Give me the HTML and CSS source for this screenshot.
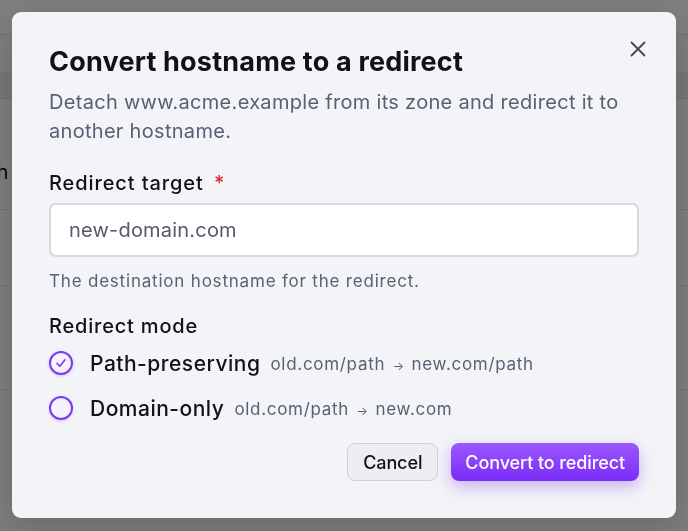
FILE: index.html
```html
<!DOCTYPE html>
<html lang="en">
<head>
  <meta charset="UTF-8" />
  <title>Hostnames – Convert to redirect</title>
  <meta name="viewport" content="width=device-width, initial-scale=1" />
  <link rel="stylesheet" href="styles.css">
</head>
<body>
  <!-- page behind the dialog -->
  <div class="page">
    <div class="page-bar"></div>
    <div class="page-tabs"></div>
    <div class="table-head"></div>
    <div class="table-row tall"><span class="cell">Path</span></div>
    <div class="table-row"></div>
    <div class="table-row mid"></div>
    <div class="table-row"></div>
  </div>
  <div class="backdrop"></div>

  <div class="dialog" role="dialog" aria-labelledby="dlg-title">
    <button class="close-btn" aria-label="Close">
      <svg width="16" height="16" viewBox="0 0 16 16" fill="none" stroke="#45474f" stroke-width="1.8" stroke-linecap="round">
        <path d="M1.5 1.5 L14.5 14.5 M14.5 1.5 L1.5 14.5" />
      </svg>
    </button>
    <h2 class="dialog-title" id="dlg-title">Convert hostname to a redirect</h2>
    <p class="dialog-desc">Detach www.acme.example from its zone and redirect it to another hostname.</p>

    <label class="field-label" for="target">Redirect target <span class="req">*</span></label>
    <input class="text-input" id="target" type="text" placeholder="new-domain.com">
    <div class="help">The destination hostname for the redirect.</div>

    <div class="field-label mode-label">Redirect mode</div>
    <div class="radio-list">
      <label class="radio-row">
        <span class="radio checked">
          <svg width="12" height="12" viewBox="0 0 12 12" fill="none" stroke="#7c3aed" stroke-width="1.6" stroke-linecap="round" stroke-linejoin="round">
            <path d="M2 6.4 L4.8 9.2 L10 2.8" />
          </svg>
        </span>
        <span class="radio-name">Path-preserving</span>
        <span class="radio-hint">old.com/path <span class="arrow">→</span> new.com/path</span>
      </label>
      <label class="radio-row">
        <span class="radio"></span>
        <span class="radio-name">Domain-only</span>
        <span class="radio-hint">old.com/path <span class="arrow">→</span> new.com</span>
      </label>
    </div>

    <div class="actions">
      <button class="btn btn-ghost">Cancel</button>
      <button class="btn btn-primary">Convert to redirect</button>
    </div>
  </div>
</body>
</html>
```

FILE: styles.css
```css
:root {
  --violet: #7c3aed;
  --ink: #111216;
  --muted: #5a5f72;
}
html, body {
  margin: 0;
  padding: 0;
  height: 100%;
  overflow: hidden;
}
body {
  font-family: 'Inter', 'Noto Sans', Arial, sans-serif;
  color: var(--ink);
  background: #fafafa;
  position: relative;
}

/* faint table underneath */
.page {
  margin-left: -40px;
}
.page-bar {
  height: 34px;
  border-bottom: 1px solid #e4e4e4;
  background: #fdfdfd;
}
.page-tabs {
  height: 37px;
  background: #fafafa;
}
.table-head {
  height: 25px;
  background: #ececec;
  border-top: 1px solid #e2e2e2;
}
.table-row {
  height: 75px;
  border-top: 1px solid #e2e2e2;
  display: flex;
  align-items: center;
}
.table-row.tall {
  height: 110px;
}
.table-row.mid {
  height: 103px;
}
.cell {
  font-size: 20px;
  color: #111;
  padding-top: 36px;
  padding-left: 6px;
}
.backdrop {
  position: fixed;
  inset: 0;
  background: rgba(0, 0, 0, 0.5);
}

/* dialog */
.dialog {
  position: absolute;
  left: 12px;
  top: 12px;
  width: 664px;
  height: 506px;
  box-sizing: border-box;
  padding: 34px 37px 37px 37px;
  background: #f3f4f8;
  border-radius: 9px;
  box-shadow: 0 10px 30px rgba(0, 0, 0, 0.15);
}
.close-btn {
  position: absolute;
  top: 23px;
  right: 24px;
  width: 28px;
  height: 28px;
  padding: 0;
  border: none;
  background: transparent;
  display: flex;
  align-items: center;
  justify-content: center;
  cursor: pointer;
}
.dialog-title {
  margin: 0;
  font-size: 27px;
  line-height: 32px;
  font-weight: 700;
  letter-spacing: 0.2px;
}
.dialog-desc {
  margin: 10px 0 0 0;
  font-size: 20px;
  line-height: 29px;
  color: var(--muted);
  letter-spacing: 0.3px;
  max-width: 585px;
}
.field-label {
  display: block;
  margin-top: 25px;
  font-size: 20px;
  line-height: 24px;
  font-weight: 500;
  letter-spacing: 0.9px;
}
.req {
  color: #e5252a;
  margin-left: 4px;
}
.text-input {
  display: block;
  margin-top: 8px;
  width: 100%;
  height: 54px;
  box-sizing: border-box;
  padding: 0 18px;
  border: 2px solid #d9dadf;
  border-radius: 7px;
  background: #fff;
  font-family: inherit;
  font-size: 20px;
  letter-spacing: 0.2px;
  color: var(--ink);
  outline: none;
}
.text-input::placeholder {
  color: #555a6e;
}
.help {
  margin-top: 13px;
  font-size: 17px;
  line-height: 22px;
  color: var(--muted);
  letter-spacing: 0.8px;
}
.mode-label {
  margin-top: 22px;
  letter-spacing: 0.8px;
}
.radio-list {
  margin-top: 13px;
  display: flex;
  flex-direction: column;
  gap: 21px;
}
.radio-row {
  display: flex;
  align-items: center;
  height: 24px;
  cursor: pointer;
}
.radio {
  width: 20px;
  height: 20px;
  border: 2px solid var(--violet);
  border-radius: 50%;
  background: #f6f3ff;
  box-shadow: 0 1px 3px rgba(124, 58, 237, 0.25);
  display: flex;
  align-items: center;
  justify-content: center;
  margin-right: 17px;
  flex: none;
}
.radio-name {
  font-size: 21px;
  font-weight: 500;
  letter-spacing: 0.5px;
}
.radio-hint {
  margin-left: 10px;
  font-size: 17px;
  color: var(--muted);
  letter-spacing: 0.7px;
  padding-top: 1px;
}
.arrow {
  font-size: 12px;
  letter-spacing: 0;
  margin: 0 2px;
}
.actions {
  margin-top: 23px;
  display: flex;
  justify-content: flex-end;
  gap: 13px;
}
.btn {
  font-family: inherit;
  font-size: 18px;
  font-weight: 500;
  height: 38px;
  border-radius: 8px;
  cursor: pointer;
  letter-spacing: -0.1px;
}
.btn-ghost {
  padding: 0 15px;
  background: #eceef2;
  border: 1px solid #cfd1d7;
  color: var(--ink);
}
.btn-primary {
  padding: 0 14px;
  border: none;
  color: #fff;
  background: linear-gradient(180deg, #9b58ff 0%, #7a2cf6 100%);
  box-shadow: 0 6px 16px rgba(124, 58, 237, 0.35);
}
```
